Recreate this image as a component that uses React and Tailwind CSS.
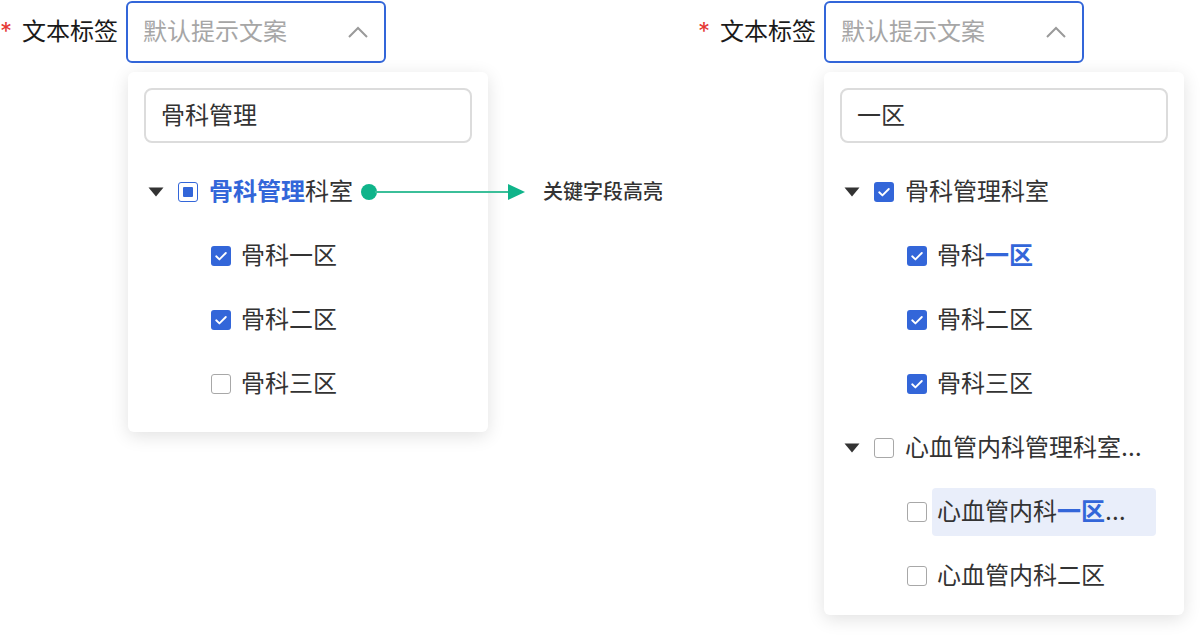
import React from "react";

const FONT = { fontFamily: '"Inter", "Noto Sans CJK SC", sans-serif' };

function Triangle() {
  return (
    <svg width="16" height="10" viewBox="0 0 16 10" className="shrink-0">
      <path d="M0.5 0.5h15L8 9.5z" fill="#333" />
    </svg>
  );
}

function Checkbox({ state = "off" }) {
  if (state === "on") {
    return (
      <span className="flex h-5 w-5 shrink-0 items-center justify-center rounded-[3px] bg-[#3366d9]">
        <svg width="20" height="20" viewBox="0 0 20 20">
          <path d="M5.2 10.3l3.2 3.1L14.8 7" fill="none" stroke="#fff" strokeWidth="1.9" strokeLinecap="round" strokeLinejoin="round" />
        </svg>
      </span>
    );
  }
  if (state === "half") {
    return (
      <span className="flex h-5 w-5 shrink-0 items-center justify-center rounded-[3px] border-[1.5px] border-[#3366d9] bg-white">
        <span className="h-[10px] w-[10px] rounded-[1px] bg-[#3366d9]" />
      </span>
    );
  }
  return <span className="h-5 w-5 shrink-0 rounded-[3px] border-[1.5px] border-[#a8a8a8] bg-white" />;
}

function ParentRow({ state, children }) {
  return (
    <div className="flex h-16 items-center">
      <span className="ml-1 flex w-[30px] shrink-0">
        <Triangle />
      </span>
      <Checkbox state={state} />
      <span className="ml-[11px] whitespace-nowrap text-[24px] text-[#333]">{children}</span>
    </div>
  );
}

function ChildRow({ state, children, active }) {
  return (
    <div className="flex h-16 items-center pl-[67px]">
      <Checkbox state={state} />
      {active ? (
        <span className="ml-[5px] flex h-12 w-[224px] items-center rounded-[4px] bg-[#e9eefa] px-[5px] whitespace-nowrap text-[24px] text-[#333]">
          {children}
        </span>
      ) : (
        <span className="ml-[10px] whitespace-nowrap text-[24px] text-[#333]">{children}</span>
      )}
    </div>
  );
}

function Field({ value, panelClass, children }) {
  return (
    <div className="flex">
      <div className="flex h-[62px] items-center">
        <span className="w-[22px] text-[24px] leading-none text-[#e53935]">*</span>
        <span className="text-[24px] text-[#1a1a1a]">文本标签</span>
      </div>
      <div className="ml-[8px] flex flex-col">
        <div className="flex h-[62px] w-[260px] items-center justify-between rounded-md border-2 border-[#3366d9] pl-[15px] pr-[15px]">
          <span className="text-[24px] text-[#a6a6a6]">默认提示文案</span>
          <svg width="22" height="14" viewBox="0 0 22 14">
            <path d="M2 12L11 3l9 9" fill="none" stroke="#9a9a9a" strokeWidth="2" />
          </svg>
        </div>
        <div className={"mt-[9px] w-[360px] rounded-md bg-white p-4 shadow-[0_4px_18px_rgba(0,0,0,0.12)] " + panelClass}>
          <div className="flex h-[55px] items-center rounded-lg border-2 border-[#dcdcdc] px-[15px] text-[24px] text-[#333]">
            {value}
          </div>
          <div className="mt-[17px]">{children}</div>
        </div>
      </div>
    </div>
  );
}

export default function App() {
  return (
    <div className="relative h-[636px] w-[1200px] overflow-hidden bg-white pt-[1px]" style={FONT}>
      <div className="flex">
        <div className="w-[698px]">
          <Field value="骨科管理" panelClass="ml-[2px]">
            <ParentRow state="half">
              <span className="font-bold text-[#3366d9]">骨科管理</span>科室
            </ParentRow>
            <ChildRow state="on">骨科一区</ChildRow>
            <ChildRow state="on">骨科二区</ChildRow>
            <ChildRow state="off">骨科三区</ChildRow>
          </Field>
        </div>
        <Field value="一区" panelClass="pb-[7px]">
          <ParentRow state="on">骨科管理科室</ParentRow>
          <ChildRow state="on">
            骨科<span className="font-bold text-[#3366d9]">一区</span>
          </ChildRow>
          <ChildRow state="on">骨科二区</ChildRow>
          <ChildRow state="on">骨科三区</ChildRow>
          <ParentRow state="off">心血管内科管理科室…</ParentRow>
          <ChildRow state="off" active>
            心血管内科<span className="font-bold text-[#3366d9]">一区</span>…
          </ChildRow>
          <ChildRow state="off">心血管内科二区</ChildRow>
        </Field>
      </div>

      {/* annotation: keyword highlight */}
      <div className="absolute left-[361px] top-[176px] flex h-8 items-center">
        <svg width="166" height="18" viewBox="0 0 166 18">
          <circle cx="8" cy="9" r="8" fill="#0fb48a" />
          <line x1="14" y1="9" x2="150" y2="9" stroke="#3bbf99" strokeWidth="2" />
          <path d="M147 1l17 8-17 8z" fill="#0fb48a" />
        </svg>
        <span className="ml-[16px] text-[20px] font-medium text-[#333]">关键字段高亮</span>
      </div>
    </div>
  );
}
